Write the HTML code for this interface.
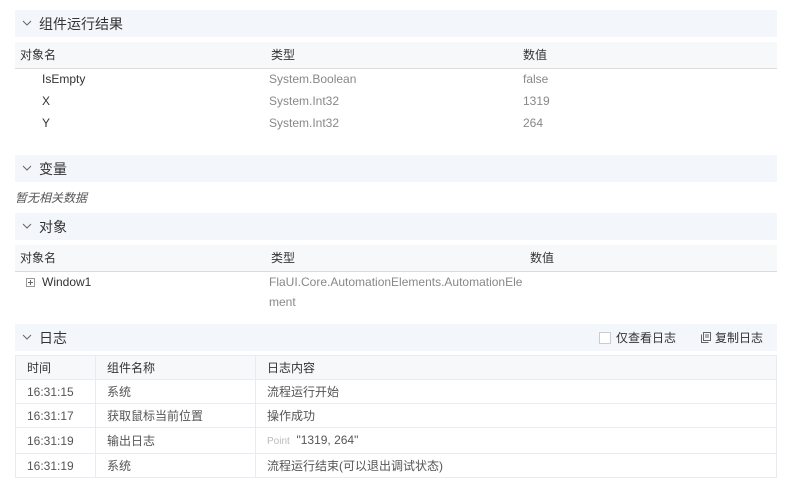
<!DOCTYPE html>
<html><head><meta charset="utf-8"><style>
body{margin:0;width:787px;height:496px;background:#fff;font-family:"Liberation Sans","Noto Sans CJK SC",sans-serif;font-size:12px;color:#333;position:relative;overflow:hidden}
.a{position:absolute}
.hd{position:absolute;left:15px;width:762px;height:27px;background:#f3f6fa;font-size:14px;line-height:28px}
.hd span{position:absolute;left:24px}
.hd svg{position:absolute;left:7px;top:10px}
.th{position:absolute;left:15px;width:762px;height:26px;background:#f7f8fa;border-bottom:1px solid #dcdcdc;line-height:27px}
.g{color:#888}
table{position:absolute;left:15px;top:355px;width:762px;border-collapse:collapse}
td{border:1px solid #e8ecf2;height:22px;padding:1px 0 0 11px;color:#555;line-height:22px}
tr:first-child td{background:#f7f8fa;color:#333}
</style></head><body>
<div class="hd" style="top:10px"><svg width="10" height="7"><path d="M1 1l4 4 4-4" fill="none" stroke="#666"/></svg><span>组件运行结果</span></div>
<div class="th" style="top:42px"><span class="a" style="left:5px">对象名</span><span class="a" style="left:256px">类型</span><span class="a" style="left:508px">数值</span></div>
<div class="a" style="left:42px;top:72px">IsEmpty</div><div class="a g" style="left:269px;top:72px">System.Boolean</div><div class="a g" style="left:523px;top:72px">false</div>
<div class="a" style="left:42px;top:94px">X</div><div class="a g" style="left:269px;top:94px">System.Int32</div><div class="a g" style="left:523px;top:94px">1319</div>
<div class="a" style="left:42px;top:116px">Y</div><div class="a g" style="left:269px;top:116px">System.Int32</div><div class="a g" style="left:523px;top:116px">264</div>
<div class="hd" style="top:155px"><svg width="10" height="7"><path d="M1 1l4 4 4-4" fill="none" stroke="#666"/></svg><span>变量</span></div>
<div class="a" style="left:15px;top:189px;font-style:italic;color:#555">暂无相关数据</div>
<div class="hd" style="top:213px"><svg width="10" height="7"><path d="M1 1l4 4 4-4" fill="none" stroke="#666"/></svg><span>对象</span></div>
<div class="th" style="top:245px"><span class="a" style="left:5px">对象名</span><span class="a" style="left:256px">类型</span><span class="a" style="left:515px">数值</span></div>
<svg class="a" style="left:26px;top:278px" width="9" height="9"><rect x=".5" y=".5" width="8" height="8" fill="none" stroke="#999"/><path d="M2 4.5h5M4.5 2v5" stroke="#666"/></svg>
<div class="a" style="left:42px;top:275px">Window1</div>
<div class="a g" style="left:269px;top:275px">FlaUI.Core.AutomationElements.AutomationEle</div>
<div class="a g" style="left:269px;top:295px">ment</div>
<div class="hd" style="top:324px"><svg width="10" height="7"><path d="M1 1l4 4 4-4" fill="none" stroke="#666"/></svg><span>日志</span>
<span style="left:584px;top:8px;width:10px;height:10px;border:1px solid #ccc;background:#fff;line-height:10px"></span>
<span style="left:601px;font-size:12px">仅查看日志</span>
<svg style="left:686px;top:8px" width="10" height="11"><rect x="2.5" y=".5" width="7" height="8" fill="none" stroke="#666"/><path d="M.5 2.5v8h7" fill="none" stroke="#666"/><path d="M4 3h4M4 5h4" stroke="#666"/></svg>
<span style="left:700px;font-size:12px">复制日志</span></div>
<table>
<tr><td style="width:68px">时间</td><td style="width:148px">组件名称</td><td>日志内容</td></tr>
<tr><td>16:31:15</td><td>系统</td><td>流程运行开始</td></tr>
<tr><td>16:31:17</td><td>获取鼠标当前位置</td><td>操作成功</td></tr>
<tr><td>16:31:19</td><td>输出日志</td><td><span style="color:#bbb;font-size:10px">Point</span> &nbsp;"1319, 264"</td></tr>
<tr><td>16:31:19</td><td>系统</td><td>流程运行结束(可以退出调试状态)</td></tr>
</table>
</body></html>
